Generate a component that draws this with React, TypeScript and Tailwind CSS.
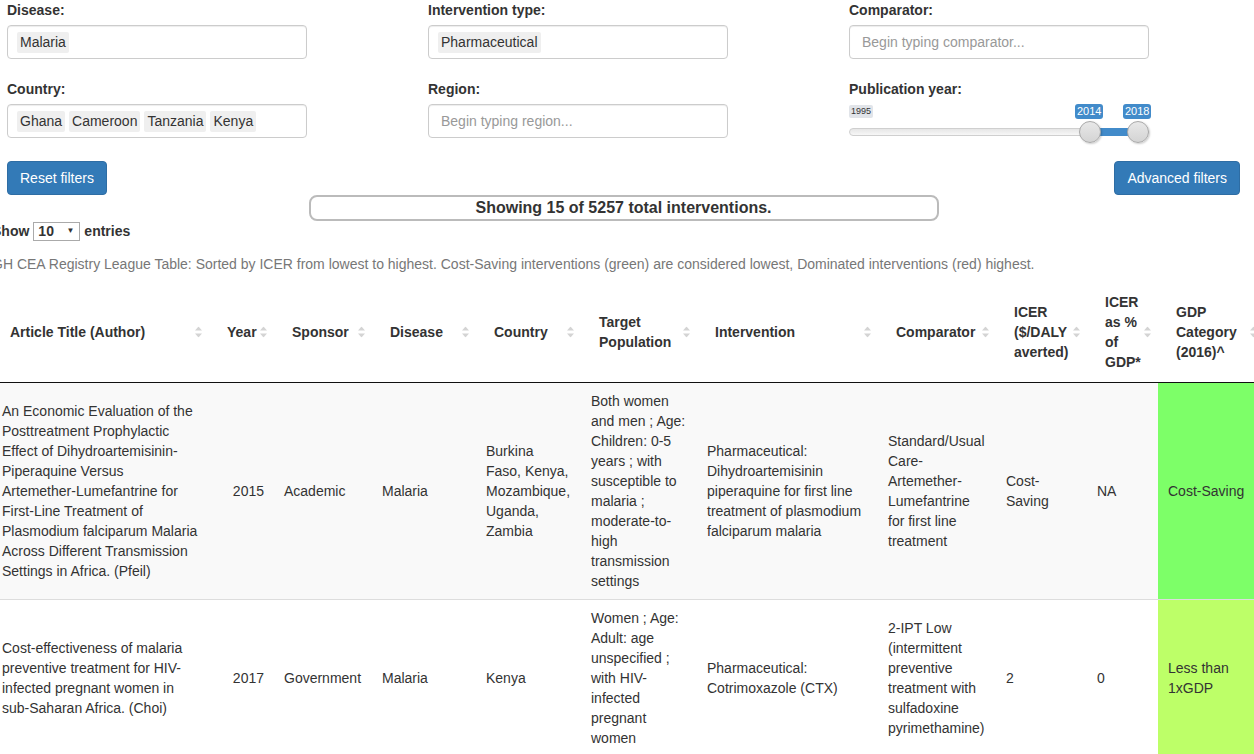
import React from "react";

type Row = {
  title: string;
  year: string;
  sponsor: string;
  disease: string;
  country: string;
  target: string;
  intervention: string;
  comparator: string;
  icer: string;
  pct: string;
  gdp: string;
  gdpColor: string;
  striped: boolean;
};

const rows: Row[] = [
  {
    title:
      "An Economic Evaluation of the Posttreatment Prophylactic Effect of Dihydroartemisinin-Piperaquine Versus Artemether-Lumefantrine for First-Line Treatment of Plasmodium falciparum Malaria Across Different Transmission Settings in Africa. (Pfeil)",
    year: "2015",
    sponsor: "Academic",
    disease: "Malaria",
    country: "Burkina Faso, Kenya, Mozambique, Uganda, Zambia",
    target:
      "Both women and men ; Age: Children: 0-5 years ; with susceptible to malaria ; moderate-to-high transmission settings",
    intervention: "Pharmaceutical: Dihydroartemisinin piperaquine for first line treatment of plasmodium falciparum malaria",
    comparator: "Standard/Usual Care-Artemether-Lumefantrine for first line treatment",
    icer: "Cost-Saving",
    pct: "NA",
    gdp: "Cost-Saving",
    gdpColor: "bg-[#7dff68]",
    striped: true,
  },
  {
    title: "Cost-effectiveness of malaria preventive treatment for HIV-infected pregnant women in sub-Saharan Africa. (Choi)",
    year: "2017",
    sponsor: "Government",
    disease: "Malaria",
    country: "Kenya",
    target: "Women ; Age: Adult: age unspecified ; with HIV-infected pregnant women",
    intervention: "Pharmaceutical: Cotrimoxazole (CTX)",
    comparator: "2-IPT Low (intermittent preventive treatment with sulfadoxine pyrimethamine)",
    icer: "2",
    pct: "0",
    gdp: "Less than 1xGDP",
    gdpColor: "bg-[#bdff68]",
    striped: false,
  },
];

const SortIcon = () => (
  <svg
    className="absolute right-[7px] top-1/2 -translate-y-1/2"
    width="7"
    height="11"
    viewBox="0 0 7 11"
  >
    <path d="M3.5 0L7 4H0z" fill="#d4d4d4" />
    <path d="M0 7h7l-3.5 4z" fill="#d4d4d4" />
  </svg>
);

const Tag = ({ children }: { children: React.ReactNode }) => (
  <span className="inline-block bg-[#efefef] px-[3px] h-[21px] leading-[21px] rounded-[2px]">{children}</span>
);

const Field = ({ label, children }: { label: string; children: React.ReactNode }) => (
  <div className="mb-[20px]">
    <div className="font-bold h-[20px] mb-[5px]">{label}</div>
    {children}
  </div>
);

const Box = ({ children }: { children: React.ReactNode }) => (
  <div className="w-[300px] h-[34px] border border-[#ccc] rounded-[4px] flex items-center gap-[4px] pl-[9px] shadow-[inset_0_1px_1px_rgba(0,0,0,0.075)]">
    {children}
  </div>
);

const Placeholder = ({ text }: { text: string }) => (
  <span className="pl-[3px] text-[#999]">{text}</span>
);

const YearSlider = () => (
  <div className="relative w-[300px] h-[44px]">
    <span className="absolute left-0 top-[1px] bg-[#e1e4e9] text-[#333] text-[9px] leading-[13px] px-[2px] rounded-[2px]">
      1995
    </span>
    <span className="absolute left-[226px] top-0 bg-[#428bca] text-white text-[11px] leading-[15px] px-[2px] rounded-[3px]">
      2014
    </span>
    <span className="absolute left-[274px] top-0 bg-[#428bca] text-white text-[11px] leading-[15px] px-[2px] rounded-[3px]">
      2018
    </span>
    <div className="absolute left-0 top-[24px] w-[300px] h-[8px] rounded-full border border-[#cfcfcf] bg-gradient-to-b from-[#e6e6e6] to-[#f7f7f7]" />
    <div className="absolute left-[241px] top-[24px] w-[48px] h-[8px] bg-[#428bca]" />
    <div className="absolute left-[230px] top-[17px] w-[22px] h-[22px] rounded-full border border-[#a9a9a9] bg-gradient-to-b from-[#e8e8e8] to-[#d4d4d4] shadow-[1px_1px_2px_rgba(0,0,0,0.2)]" />
    <div className="absolute left-[278px] top-[17px] w-[22px] h-[22px] rounded-full border border-[#a9a9a9] bg-gradient-to-b from-[#e8e8e8] to-[#d4d4d4] shadow-[1px_1px_2px_rgba(0,0,0,0.2)]" />
  </div>
);

const headers: { label: string; width: string }[] = [
  { label: "Article Title (Author)", width: "w-[217px]" },
  { label: "Year", width: "w-[65px]" },
  { label: "Sponsor", width: "w-[98px]" },
  { label: "Disease", width: "w-[104px]" },
  { label: "Country", width: "w-[105px]" },
  { label: "Target Population", width: "w-[116px]" },
  { label: "Intervention", width: "w-[181px]" },
  { label: "Comparator", width: "w-[118px]" },
  { label: "ICER ($/DALY averted)", width: "w-[91px]" },
  { label: "ICER as % of GDP*", width: "w-[71px]" },
  { label: "GDP Category (2016)^", width: "w-[106px]" },
];

export default function App() {
  const td = "px-[10px] py-[8px] align-middle border-t border-[#ddd]";
  return (
    <div className="w-[1254px] h-[754px] overflow-hidden bg-white text-[#333] text-[14px] leading-[20px] font-['Liberation_Sans',Arial,sans-serif]">
      <div className="ml-[-8px] w-[1263px]">
        {/* Filters */}
        <div className="grid grid-cols-3">
          <div className="px-[15px]">
            <Field label="Disease:">
              <Box>
                <Tag>Malaria</Tag>
              </Box>
            </Field>
            <Field label="Country:">
              <Box>
                <Tag>Ghana</Tag>
                <Tag>Cameroon</Tag>
                <Tag>Tanzania</Tag>
                <Tag>Kenya</Tag>
              </Box>
            </Field>
          </div>
          <div className="px-[15px]">
            <Field label="Intervention type:">
              <Box>
                <Tag>Pharmaceutical</Tag>
              </Box>
            </Field>
            <Field label="Region:">
              <Box>
                <Placeholder text="Begin typing region..." />
              </Box>
            </Field>
          </div>
          <div className="px-[15px]">
            <Field label="Comparator:">
              <Box>
                <Placeholder text="Begin typing comparator..." />
              </Box>
            </Field>
            <div>
              <div className="font-bold h-[20px] mb-[5px]">Publication year:</div>
              <YearSlider />
            </div>
          </div>
        </div>

        <div className="flex justify-between px-[15px] mt-[3px]">
          <button className="h-[34px] px-[12px] bg-[#337ab7] border border-[#2e6da4] rounded-[4px] text-white">
            Reset filters
          </button>
          <button className="h-[34px] px-[12px] bg-[#337ab7] border border-[#2e6da4] rounded-[4px] text-white">
            Advanced filters
          </button>
        </div>

        <div className="w-[630px] h-[26px] mx-auto border-2 border-[#bbb] rounded-[8px] flex items-center justify-center font-bold text-[16px] leading-[22px]">
          Showing 15 of 5257 total interventions.
        </div>

        {/* Length selector */}
        <div className="flex items-center h-[20px] font-bold">
          <span>Show</span>
          <span className="mx-[4px] w-[47px] h-[19px] border border-[#aaa] flex items-center justify-between pl-[4px] pr-[5px]">
            <span>10</span>
            <span className="text-[8px] leading-[8px]">▼</span>
          </span>
          <span>entries</span>
        </div>

        <div className="mt-[5px] pt-[8px] pb-[8px] text-[#777]">
          GH CEA Registry League Table: Sorted by ICER from lowest to highest. Cost-Saving interventions (green) are considered
          lowest, Dominated interventions (red) highest.
        </div>

        <table className="table-fixed border-collapse w-[1267px] text-left">
          <colgroup>
            {headers.map((h) => (
              <col key={h.label} className={h.width} />
            ))}
          </colgroup>
          <thead>
            <tr>
              {headers.map((h) => (
                <th
                  key={h.label}
                  className="relative px-[18px] py-[10px] font-bold align-middle border-b border-[#111]"
                >
                  {h.label}
                  <SortIcon />
                </th>
              ))}
            </tr>
          </thead>
          <tbody>
            {rows.map((r) => (
              <tr key={r.year} className={r.striped ? "bg-[#f9f9f9]" : "bg-white"}>
                <td className={td}>{r.title}</td>
                <td className={`${td} text-right`}>{r.year}</td>
                <td className={td}>{r.sponsor}</td>
                <td className={td}>{r.disease}</td>
                <td className={td}>{r.country}</td>
                <td className={td}>{r.target}</td>
                <td className={td}>{r.intervention}</td>
                <td className={td}>{r.comparator}</td>
                <td className={td}>{r.icer}</td>
                <td className={td}>{r.pct}</td>
                <td className={`${td} ${r.gdpColor}`}>{r.gdp}</td>
              </tr>
            ))}
          </tbody>
        </table>
      </div>
    </div>
  );
}
